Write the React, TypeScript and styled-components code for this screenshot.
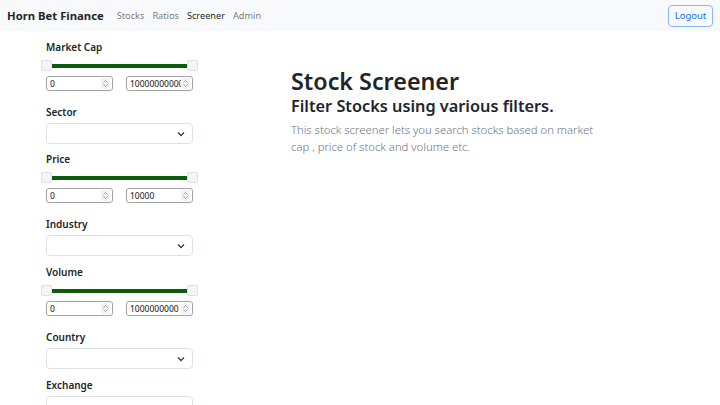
import React from "react";
import styled, { createGlobalStyle } from "styled-components";

const Global = createGlobalStyle`
  html, body { margin: 0; padding: 0; background: #fff; }
  body { font-family: "Noto Sans", "Open Sans", sans-serif; color: #212529; }
  * { box-sizing: border-box; }
`;

const Nav = styled.nav`
  height: 31px;
  background: #f8f9fa;
  display: flex;
  align-items: center;
  padding: 0 7px;
`;

const Brand = styled.div`
  font-size: 11.3px;
  font-weight: 700;
  color: #212529;
  margin-right: 13px;
`;

const NavLinks = styled.div`
  display: flex;
  gap: 8px;
  flex: 1;
`;

const NavLink = styled.span<{ $active?: boolean }>`
  font-size: 9.2px;
  color: ${(p) => (p.$active ? "rgba(0,0,0,0.9)" : "rgba(0,0,0,0.55)")};
`;

const LogoutBtn = styled.button`
  font-family: inherit;
  font-size: 9.5px;
  color: #0d6efd;
  background: transparent;
  border: 1px solid #86b7fe;
  border-radius: 4px;
  height: 22px;
  width: 45px;
  padding: 0;
`;

const Layout = styled.div`
  display: flex;
`;

const Sidebar = styled.aside`
  width: 245px;
  padding: 9px 0 0 46px;
  display: flex;
  flex-direction: column;
`;

const Main = styled.main`
  flex: 1;
  padding: 36px 0 0 46px;
`;

const Label = styled.div`
  font-size: 10px;
  font-weight: 600;
  color: #212529;
  height: 14px;
  line-height: 14px;
`;

const Group = styled.div<{ $mb: number }>`
  display: flex;
  flex-direction: column;
  margin-bottom: ${(p) => p.$mb}px;
`;

const SliderWrap = styled.div`
  position: relative;
  width: 157px;
  height: 12px;
  margin: 6px 0 4px -5px;
  display: flex;
  align-items: center;
`;

const Track = styled.div`
  margin: 0 5px;
  flex: 1;
  height: 4px;
  background: #0b5d0b;
`;

const Thumb = styled.div<{ $side: "l" | "r" }>`
  position: absolute;
  top: 0;
  ${(p) => (p.$side === "l" ? "left: 0;" : "right: 0;")}
  width: 11px;
  height: 11px;
  background: #f5f5f5;
  border: 1px solid #e0e0e0;
  border-radius: 2px;
`;

const InputsRow = styled.div`
  display: flex;
  gap: 13px;
`;

const NumBox = styled.div`
  width: 67px;
  height: 15px;
  border: 1px solid #a3a3a3;
  border-radius: 3px;
  display: flex;
  align-items: center;
  padding: 0 2px 0 3px;
  font-size: 8.5px;
  color: #111;
  overflow: hidden;
`;

const NumText = styled.span`
  flex: 1;
  min-width: 0;
  overflow: hidden;
  white-space: nowrap;
`;

const Spin = styled.span`
  width: 9px;
  height: 11px;
  display: flex;
  align-items: center;
  justify-content: center;
  border-radius: 2px;
  background: #f3f3f3;
  flex-shrink: 0;
`;

const Select = styled.div`
  margin-top: 4px;
  width: 147px;
  height: 21px;
  border: 1px solid #dee2e6;
  border-radius: 4px;
  display: flex;
  align-items: center;
  justify-content: flex-end;
  padding-right: 7px;
`;

const Title = styled.h1`
  margin: 0;
  font-size: 23.3px;
  font-weight: 600;
  line-height: 29px;
  color: #212529;
`;

const Subtitle = styled.h2`
  margin: 0;
  font-size: 16.3px;
  font-weight: 600;
  line-height: 21px;
  color: #212529;
`;

const Lead = styled.p`
  margin: 4px 0 0;
  font-size: 11.3px;
  line-height: 17px;
  font-weight: 300;
  color: #6c757d;
  width: 310px;
`;

const SpinIcon = () => (
  <svg width="7" height="9" viewBox="0 0 7 9">
    <path d="M1.5 3.5 L3.5 1.5 L5.5 3.5 M1.5 5.5 L3.5 7.5 L5.5 5.5" fill="none" stroke="#8a8a8a" strokeWidth="0.8" />
  </svg>
);

const Chevron = () => (
  <svg width="8" height="6" viewBox="0 0 8 6">
    <path d="M1 1.5 L4 4.5 L7 1.5" fill="none" stroke="#343a40" strokeWidth="1.3" />
  </svg>
);

const Range = ({ label, max, mb }: { label: string; max: string; mb: number }) => (
  <Group $mb={mb}>
    <Label>{label}</Label>
    <SliderWrap>
      <Thumb $side="l" />
      <Track />
      <Thumb $side="r" />
    </SliderWrap>
    <InputsRow>
      <NumBox>
        <NumText>0</NumText>
        <Spin><SpinIcon /></Spin>
      </NumBox>
      <NumBox>
        <NumText>{max}</NumText>
        <Spin><SpinIcon /></Spin>
      </NumBox>
    </InputsRow>
  </Group>
);

const Drop = ({ label, mb }: { label: string; mb: number }) => (
  <Group $mb={mb}>
    <Label>{label}</Label>
    <Select>
      <Chevron />
    </Select>
  </Group>
);

export default function App() {
  return (
    <>
      <Global />
      <Nav>
        <Brand>Horn Bet Finance</Brand>
        <NavLinks>
          <NavLink>Stocks</NavLink>
          <NavLink>Ratios</NavLink>
          <NavLink $active>Screener</NavLink>
          <NavLink>Admin</NavLink>
        </NavLinks>
        <LogoutBtn>Logout</LogoutBtn>
      </Nav>
      <Layout>
        <Sidebar>
          <Range label="Market Cap" max="1000000000000" mb={14} />
          <Drop label="Sector" mb={8} />
          <Range label="Price" max="10000" mb={14} />
          <Drop label="Industry" mb={9} />
          <Range label="Volume" max="1000000000" mb={14} />
          <Drop label="Country" mb={9} />
          <Drop label="Exchange" mb={8} />
        </Sidebar>
        <Main>
          <Title>Stock Screener</Title>
          <Subtitle>Filter Stocks using various filters.</Subtitle>
          <Lead>
            This stock screener lets you search stocks based on market cap , price of stock and volume etc.
          </Lead>
        </Main>
      </Layout>
    </>
  );
}
